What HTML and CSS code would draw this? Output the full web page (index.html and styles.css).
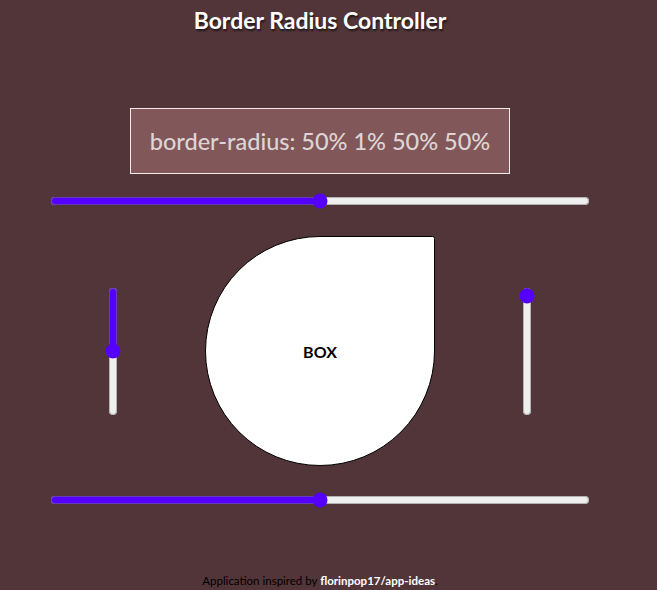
FILE: index.html
```html
<!DOCTYPE html>
<html lang="en">

<head>
    <meta charset="UTF-8">
    <meta name="viewport" content="width=device-width, initial-scale=1.0">
    <title>Border Radius Controller</title>
    <link rel="stylesheet" href="styles.css">
</head>

<body>

    <div class="container">
        <h1 class="title">Border Radius Controller</h1>

        <div class="code" id="code">border-radius: 50% 1% 50% 50%</div>

        <input type="range" class="slider slider-h" id="top" min="0" max="100" value="50">

        <div class="stage">
            <input type="range" class="slider slider-v" id="left" min="0" max="100" value="50">
            <div class="box" id="box">BOX</div>
            <input type="range" class="slider slider-v" id="right" min="0" max="100" value="1">
        </div>

        <input type="range" class="slider slider-h slider-bottom" id="bottom" min="0" max="100" value="50">

        <p class="footer">Application inspired by <a href="#">florinpop17/app-ideas</a>.</p>
    </div>

    <script>
        const box = document.getElementById("box");
        const code = document.getElementById("code");
        const ids = ["top", "right", "bottom", "left"];

        function update() {
            const v = ids.map(id => document.getElementById(id).value + "%");
            const radius = v.join(" ");
            box.style.borderRadius = radius;
            code.innerText = "border-radius: " + radius;
        }

        ids.forEach(id => document.getElementById(id).addEventListener("input", update));
        update();
    </script>
</body>

</html>
```

FILE: styles.css
```css
body {
    margin: 0;
    font-family: Lato, "Noto Sans", sans-serif;
    background-color: #523539;
}

.container {
    width: 640px;
    display: flex;
    flex-direction: column;
    align-items: center;
}

.title {
    margin: 6px 0 0;
    font-size: 23px;
    font-weight: 700;
    color: #ffffff;
    text-shadow: 1px 2px 2px rgba(0, 0, 0, 0.6);
}

.code {
    margin-top: 74px;
    width: 378px;
    height: 64px;
    display: flex;
    align-items: center;
    justify-content: center;
    background-color: #825759;
    border: 1px solid #f2eaea;
    color: #ddd5d5;
    font-size: 23.5px;
    font-weight: 500;
}

.slider {
    accent-color: #5500ff;
    margin: 0;
}

.slider-h {
    margin-top: 19px;
    width: 540px;
    height: 16px;
}

.stage {
    margin-top: 27px;
    display: flex;
    align-items: center;
    gap: 84px;
}

.slider-v {
    writing-mode: vertical-lr;
    width: 16px;
    height: 129px;
}

.box {
    width: 228px;
    height: 228px;
    display: flex;
    align-items: center;
    justify-content: center;
    background-color: #ffffff;
    border: 1px solid #000000;
    font-weight: 700;
    font-size: 16px;
    color: #000000;
}

.slider-bottom {
    margin-top: 26px;
}

.footer {
    margin: 66px 0 0;
    font-size: 11.5px;
    color: #000000;
}

.footer a {
    color: #ffffff;
    font-weight: 700;
    text-decoration: none;
}
```
